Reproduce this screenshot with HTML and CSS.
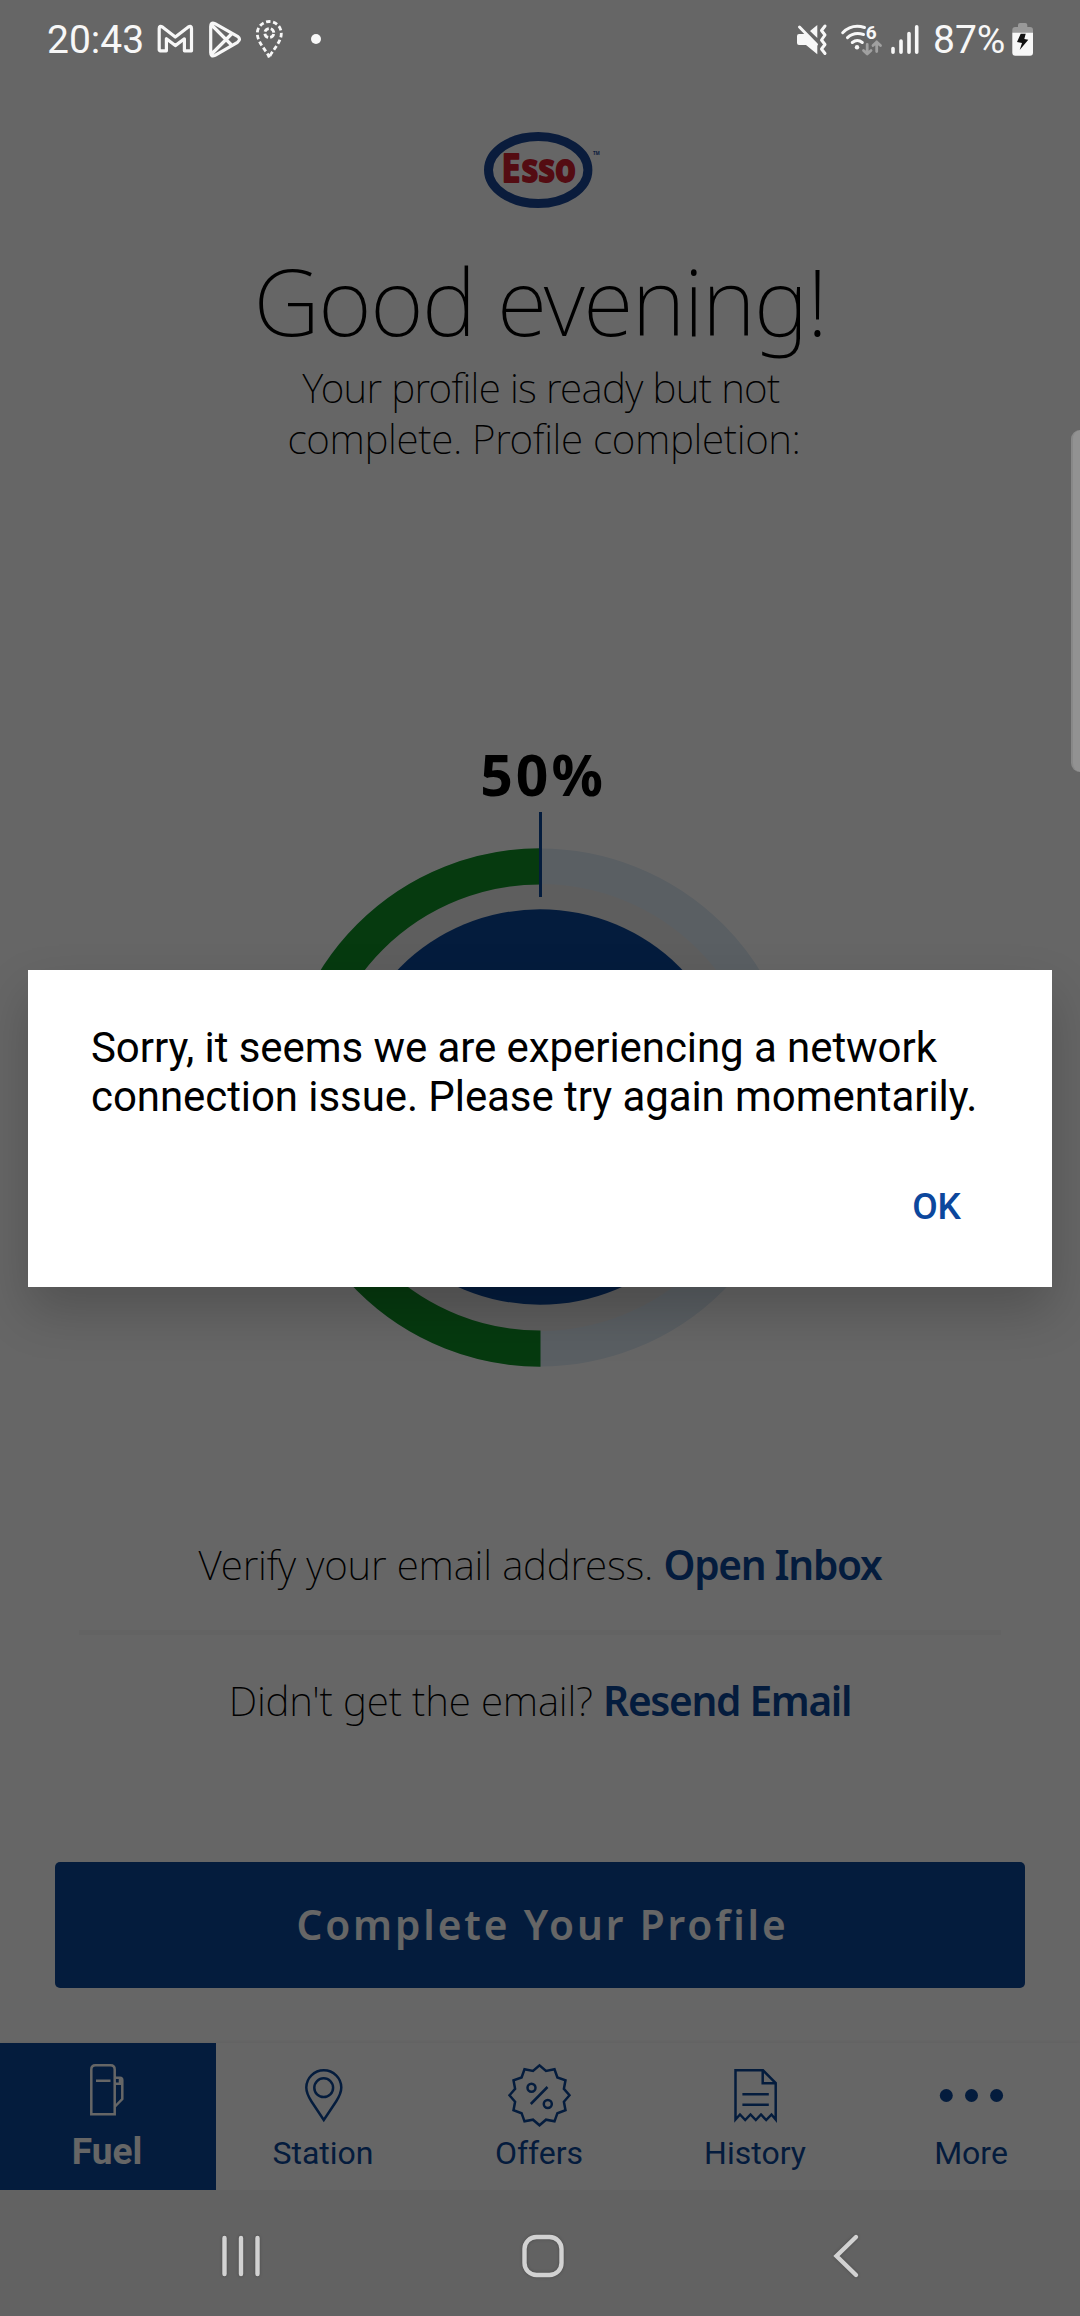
FILE: index.html
```html
<!DOCTYPE html>
<html lang="en">
<head>
<meta charset="utf-8">
<title>Esso</title>
<link rel="stylesheet" href="styles.css">
</head>
<body>
<div class="phone">
  <header class="status">
    <span class="status-text">20:43</span>
    <svg class="gmail" width="40" height="40" viewBox="0 0 40 40"><path d="M4.200 30V8.500Q4.200 5.200 7.400 7L20.300 17 33.300 7Q36.500 5.200 36.500 8.500V30.800H29.400V18.800L20.300 25.600 11.400 18.800V30.800H5Z"/></svg>
    <svg class="play" width="36" height="40" viewBox="0 0 36 40"><path d="M3.700 6.500Q3.700 1.500 8 3.600L30.500 16.300Q34.500 19.300 30.500 22.300L8 35.400Q3.700 37.500 3.700 32.500ZM4.600 5 25 25.500M4.600 34 25 13.500"/></svg>
    <svg class="place" width="30" height="40" viewBox="0 0 30 40"><path d="M14.300 37.500C12 31 2.300 22.500 2.300 13.500A12 12 0 0 1 26.300 13.500C26.300 22.500 16.600 31 14.300 37.500"/><circle class="eye" cx="14.300" cy="13" r="4.500"/></svg>
    <svg class="dot" width="12" height="40" viewBox="0 0 12 40"><circle cx="6" cy="19" r="5"/></svg>
    <span class="spacer"></span>
    <svg class="mute" width="34" height="40" viewBox="0 0 34 40"><path class="fill" d="M4 14H10L22.300 26V34.300L11 25H4Q2 25 2 23V16Q2 14 4 14ZM22.300 5V18L15 11Z"/><path class="line" d="M4.500 7 21.500 24.500M30 6 26.500 10.500 30 15 26.500 20 30 24.500 26.500 29 30 33.500"/></svg>
    <svg class="wifi" width="44" height="40" viewBox="0 0 44 40"><path class="line" d="M2.700 12.700Q12 3.500 24.500 7.500M7.500 17.700Q14 11.500 23.500 14.500M12.300 22.500Q17.300 18.500 22.300 22.500"/><circle class="fill" cx="17" cy="27.300" r="2.200"/><path class="traffic" d="M27.200 24.500V34M23.500 30.500 27.200 34 31 30.500M36.700 31.500V22M33 25.500 36.700 22 40.500 25.500"/><text x="25.700" y="18.700">6</text></svg>
    <svg class="signal" width="30" height="40" viewBox="0 0 30 40"><path d="M3 28.500V32.200M11 21V32.200M19 13.500V32.200M26.700 6.800V32.200"/></svg>
    <span class="status-text percent">87%</span>
    <svg class="battery" width="23" height="40" viewBox="0 0 23 40"><path fill="#999" d="M1.300 13V10Q1.300 7 4.300 7H7V5Q7 3 9 3H14.300Q16.300 3 16.300 5V7H19Q22 7 22 10V13Z"/><path fill="#f7f7f7" d="M1.300 12.700H22V32.500Q22 35.700 19 35.700H4.300Q1.300 35.700 1.300 32.500Z"/><path fill="#111" d="M9.700 13.700H14.700L13.300 19 17.300 19.700 8.700 30 11 23 6 22Z"/></svg>
  </header>

  <main class="content">
    <svg class="logo" width="200" height="110" viewBox="0 0 200 110">
      <ellipse cx="98.200" cy="55" rx="49.700" ry="33.500"/>
      <text class="logo-e" x="61.500" y="66.500" textLength="19" lengthAdjust="spacingAndGlyphs">E</text>
      <text class="logo-sso" x="81.500" y="66.500" textLength="54.500" lengthAdjust="spacingAndGlyphs">sso</text>
      <text class="logo-tm" x="153" y="40">TM</text>
    </svg>
    <h1>Good evening!</h1>
    <p class="intro"><span class="tight">Your profile is ready but not</span><br><span class="second">complete. Profile completion:</span></p>

    <section class="gauge">
      <strong>50%</strong>
      <svg width="540" height="560" viewBox="0 0 540 560">
        <circle cx="270" cy="295.500" r="224" fill="#ebebeb"/>
        <circle class="track" cx="270" cy="295.500" r="241.200"/>
        <path class="done" d="M270.500 54.300A241.200 241.200 0 0 0 270.500 536.700"/>
        <circle cx="270" cy="295" r="197.700" fill="#0c4799"/>
        <path d="M270.500 0V85" stroke="#0c4799" stroke-width="3"/>
      </svg>
    </section>

    <p class="email">Verify your email address. <a>Open Inbox</a></p>
    <hr>
    <p class="email">Didn't get the email? <a>Resend Email</a></p>
    <button class="primary">Complete Your Profile</button>
  </main>

  <nav class="tabs">
    <div class="tab active">
      <svg width="72" height="72" viewBox="0 0 72 72"><path d="M19.300 55.200V10.500Q19.300 6.200 23.500 6.200H38.500Q42.700 6.200 42.700 10.500V55.200ZM24 21.700H38.500M43 18.700H48Q50.300 18.700 50.300 21V40L43 47.500M43 24.700H50M48 18.700V24.700"/></svg>
      <span>Fuel</span>
    </div>
    <div class="tab">
      <svg width="72" height="72" viewBox="0 0 72 72"><path d="M35.800 61 23.500 42.500C20 37 18.300 33 18.300 28.500A17.500 17.300 0 0 1 53.300 28.500C53.300 33 51.600 37 48.100 42.500Z"/><circle cx="35.700" cy="28.700" r="9.400"/></svg>
      <span>Station</span>
    </div>
    <div class="tab">
      <svg width="72" height="72" viewBox="-35.500 -36.300 72 72"><path d="M30 0 24.400 6.500 26 15 17.900 17.900 15 26 6.500 24.400 0 30-6.500 24.400-15 26-17.900 17.900-26 15-24.400 6.500-30 0-24.400-6.500-26-15-17.900-17.900-15-26-6.500-24.400 0-30 6.500-24.400 15-26 17.900-17.900 26-15 24.400-6.500ZM-8.700 8.700 8-8.300"/><circle cx="-8" cy="-7.600" r="4"/><circle cx="8.300" cy="8.700" r="4"/></svg>
      <span>Offers</span>
    </div>
    <div class="tab">
      <svg width="72" height="72" viewBox="0 0 72 72"><path d="M15.500 11.300H43L55.700 24V60.500L51.500 55.500 46.200 61 41 55.500 35.800 61 30.500 55.500 25.200 61 20 55.500 15.500 60.500ZM42.700 11.300V24.300H55.500M22.400 35.200H48.800M22.400 45.700H48.800"/></svg>
      <span>History</span>
    </div>
    <div class="tab more">
      <svg width="72" height="72" viewBox="0 0 72 72"><circle cx="10.300" cy="36.500" r="6.500"/><circle cx="35.500" cy="36.500" r="6.500"/><circle cx="60.600" cy="36.500" r="6.500"/></svg>
      <span>More</span>
    </div>
  </nav>

  <footer class="system-nav">
    <svg width="60" height="60" viewBox="0 0 60 60"><path d="M13.500 12V48M30 12V48M46.500 12V48"/></svg>
    <svg width="60" height="60" viewBox="0 0 60 60"><rect x="11.500" y="11" width="37" height="38" rx="12"/></svg>
    <svg width="60" height="60" viewBox="0 0 60 60"><path d="M41 11 21.500 30 41 49"/></svg>
  </footer>

  <div class="scrim">
    <div class="dialog">
      <p>Sorry, it seems we are experiencing a network connection issue. Please try again momentarily.</p>
      <button>OK</button>
    </div>
  </div>
  <div class="edge-handle"></div>
</div>
</body>
</html>
```
FILE: styles.css
```css
* { box-sizing: border-box; }
body { margin: 0; background: #fff; font-family: Roboto, sans-serif; }
h1, p, hr { margin: 0; }
button { border: 0; background: none; padding: 0; }
svg { display: block; flex: none; fill: none; }

.phone {
  position: relative;
  display: flex;
  flex-direction: column;
  width: 1080px;
  height: 2316px;
  overflow: hidden;
}

/* Status bar */
.status {
  position: relative;
  z-index: 2;
  display: flex;
  align-items: center;
  height: 80px;
  padding: 0 46px 0 47px;
  color: #f7f7f7;
}
.status-text { font-size: 39px; line-height: 80px; }
.spacer { flex: 1; }
.gmail { margin-left: 11px; stroke: #f7f7f7; stroke-width: 3.2; stroke-linejoin: round; }
.play { margin-left: 12px; stroke: #f7f7f7; stroke-width: 3.2; stroke-linejoin: round; }
.place { margin-left: 12px; stroke: #f7f7f7; stroke-width: 2.8; stroke-dasharray: 4.5 2.6; }
.place .eye { stroke-dasharray: 5 2.07; stroke-dashoffset: -1; }
.dot { margin-left: 25px; fill: #f7f7f7; }
.status .fill { fill: #f7f7f7; }
.status .line { stroke: #f7f7f7; stroke-width: 3; stroke-linecap: round; stroke-linejoin: round; }
.wifi { margin-left: 11px; }
.wifi text { fill: #f7f7f7; font: 700 19px Roboto, sans-serif; }
.wifi .traffic { stroke: #a0a0a0; stroke-width: 2.8; stroke-linecap: round; stroke-linejoin: round; }
.signal { margin-left: 6px; stroke: #f7f7f7; stroke-width: 3.6; stroke-linecap: round; }
.percent { margin-left: 13px; }
.battery { margin-left: 5.6px; }

/* Page */
.content {
  flex: 1;
  display: flex;
  flex-direction: column;
  align-items: center;
  font-family: "Noto Sans", sans-serif;
  color: #000;
}
.logo { margin-top: 35px; }
.logo ellipse { stroke: #1b4796; stroke-width: 9; }
.logo text { font-family: "Noto Sans", sans-serif; font-weight: 700; }
.logo-e, .logo-sso { fill: #d3202e; stroke: #d3202e; stroke-width: 1.8; stroke-linejoin: round; }
.logo .logo-e { font-size: 39px; }
.logo .logo-sso { font-size: 38.5px; }
.logo .logo-tm { fill: #1b4796; font-size: 4.5px; }

h1 {
  margin-top: 16px;
  font-size: 92px;
  font-weight: 240;
  line-height: 120px;
  letter-spacing: -1.6px;
  white-space: nowrap;
}
.intro {
  font-size: 40.6px;
  font-weight: 240;
  line-height: 51px;
  padding-top: 1px;
  text-align: center;
}
.tight { letter-spacing: -.68px; padding-left: 2px; }
.second { letter-spacing: -.36px; padding-left: 8px; }

.gauge { display: flex; flex-direction: column; align-items: center; margin-top: 280px; }
.gauge strong { font-size: 57px; font-weight: 700; line-height: 60px; letter-spacing: 3px; padding-left: 6px; }
.gauge svg { margin-top: 8px; }
.track { stroke: #e1edf7; stroke-width: 35.6; }
.done { stroke: #0f9126; stroke-width: 36.2; }

.email { margin-top: 40px; font-size: 40.6px; font-weight: 250; line-height: 52px; letter-spacing: -.2px; white-space: nowrap; }
.gauge + .email { margin-top: 167px; }
.email a { color: #0c4799; font-weight: 600; letter-spacing: -1.3px; }
hr { width: 922px; height: 5px; margin-top: 39px; border: 0; background: #f7f7f7; }

.primary {
  width: 970px;
  height: 126px;
  margin-top: 135px;
  padding: 0 0 2px 5px;
  border-radius: 5px;
  background: #0c4799;
  color: #fff;
  font: 600 40.6px "Noto Sans", sans-serif;
  letter-spacing: 2.9px;
}

/* Tabs */
.tabs {
  display: grid;
  grid-template-columns: repeat(5, 1fr);
  height: 147px;
  background: #fff;
  box-shadow: 0 -1px 4px rgba(0, 0, 0, .05);
}
.tab {
  display: flex;
  flex-direction: column;
  align-items: center;
  padding-top: 16px;
  color: #0c4799;
  font-size: 32px;
  line-height: 40px;
}
.tab svg { stroke: currentColor; stroke-width: 2.5; overflow: visible; }
.tab span { margin-top: 2px; padding-right: 2px; }
.tab.active { background: #0c4799; color: #fff; font-size: 37px; font-weight: 700; }
.tab.active span { margin-top: 1px; }
.tab.more svg { fill: currentColor; stroke: none; }

/* System navigation */
.system-nav {
  position: relative;
  z-index: 2;
  display: flex;
  justify-content: center;
  align-items: center;
  gap: 242px;
  height: 126px;
  padding: 6px 0 0 5px;
  background: #626262;
}
.system-nav svg {
  stroke: #d2d2d2;
  stroke-width: 4.4;
  stroke-linecap: round;
  filter: drop-shadow(0 0 1.5px rgba(0, 0, 0, .25));
}

/* Dialog */
.scrim {
  position: absolute;
  inset: 0;
  z-index: 1;
  padding: 970px 28px 0;
  background: rgba(0, 0, 0, .6);
}
.dialog {
  display: flex;
  flex-direction: column;
  height: 317px;
  padding: 53px 91px 0 63px;
  background: #fff;
  box-shadow: 0 24px 48px rgba(0, 0, 0, .2);
}
.dialog p { width: 895px; font-size: 42px; line-height: 49px; color: #000; letter-spacing: -.07px; }
.dialog button {
  align-self: flex-end;
  margin-top: 64px;
  font: 500 37px/44px Roboto, sans-serif;
  color: #0c479d;
}

.edge-handle {
  position: absolute;
  z-index: 3;
  top: 430px;
  right: 0;
  width: 9px;
  height: 342px;
  border-left: 2px solid #888;
  border-radius: 9px 0 0 9px;
  background: #929292;
}
```
